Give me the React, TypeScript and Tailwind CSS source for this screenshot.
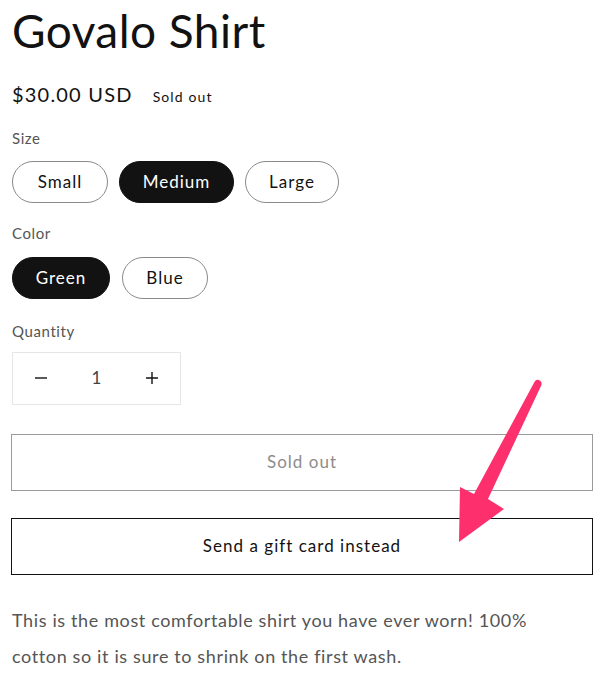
import React, { useState } from 'react';

const font = { fontFamily: 'Lato, "Noto Sans", sans-serif' };

const Pill: React.FC<{ label: string; active?: boolean; onClick?: () => void; w: string }> = ({ label, active, onClick, w }) => (
  <button
    onClick={onClick}
    className={`${w} h-[42px] rounded-full text-[17px] tracking-[0.06em] flex items-center justify-center ${
      active ? 'bg-[#121212] text-white border border-[#121212]' : 'bg-white text-[#121212] border border-[#8a8a8a]'
    }`}
  >
    {label}
  </button>
);

const App: React.FC = () => {
  const [size, setSize] = useState('Medium');
  const [color, setColor] = useState('Green');
  const [qty, setQty] = useState(1);

  return (
    <div className="relative w-[610px] h-[680px] bg-white overflow-hidden text-[#121212] px-3" style={font}>
      <h1 className="text-[46px] leading-none pt-[8px] tracking-[0.01em]">Govalo Shirt</h1>

      <div className="flex items-baseline gap-5 mt-[25px]">
        <span className="text-[20px] tracking-[0.06em]">$30.00 USD</span>
        <span className="text-[14px] tracking-[0.08em]">Sold out</span>
      </div>

      <div className="text-[15px] text-[#555] tracking-[0.04em] mt-[18px]">Size</div>
      <div className="flex gap-[11px] mt-[11px]">
        <Pill label="Small" w="w-[96px]" active={size === 'Small'} onClick={() => setSize('Small')} />
        <Pill label="Medium" w="w-[115px]" active={size === 'Medium'} onClick={() => setSize('Medium')} />
        <Pill label="Large" w="w-[94px]" active={size === 'Large'} onClick={() => setSize('Large')} />
      </div>

      <div className="text-[15px] text-[#555] tracking-[0.04em] mt-[19px]">Color</div>
      <div className="flex gap-[12px] mt-[13px]">
        <Pill label="Green" w="w-[98px]" active={color === 'Green'} onClick={() => setColor('Green')} />
        <Pill label="Blue" w="w-[86px]" active={color === 'Blue'} onClick={() => setColor('Blue')} />
      </div>

      <div className="text-[15px] text-[#555] tracking-[0.04em] mt-[21px]">Quantity</div>
      <div className="flex items-center w-[169px] h-[53px] border border-[#e6e6e6] mt-[9px] text-[#333]">
        <button onClick={() => setQty(Math.max(1, qty - 1))} className="w-[56px] h-full flex items-center justify-center">
          <svg width="14" height="14" viewBox="0 0 14 14"><path d="M1 7h12" stroke="#121212" strokeWidth="1.4" /></svg>
        </button>
        <span className="flex-1 text-center text-[17px] text-[#444]">{qty}</span>
        <button onClick={() => setQty(qty + 1)} className="w-[56px] h-full flex items-center justify-center">
          <svg width="14" height="14" viewBox="0 0 14 14"><path d="M1 7h12M7 1v12" stroke="#121212" strokeWidth="1.4" /></svg>
        </button>
      </div>

      <button className="block w-[582px] -ml-px h-[57px] mt-[29px] border border-[#9a9a9a] text-[17px] tracking-[0.06em] text-[#8c8c8c]">
        Sold out
      </button>
      <button className="block w-[582px] -ml-px h-[57px] mt-[27px] border border-[#121212] text-[17px] tracking-[0.06em]">
        Send a gift card instead
      </button>

      <p className="text-[18px] leading-[36px] text-[#555] tracking-[0.035em] mt-[27px] w-[560px]">
        This is the most comfortable shirt you have ever worn! 100% cotton so it is sure to shrink on the first wash.
      </p>

      <svg className="absolute left-0 top-0 pointer-events-none" width="610" height="680" viewBox="0 0 610 680">
        <path
          d="M539 380 Q543 382 541 386 L488 499 L504 509 L459 542 L460 487 L474 494 L535 381 Q537 379 539 380 Z"
          fill="#fd2f6c"
        />
      </svg>
    </div>
  );
};

export default App;
